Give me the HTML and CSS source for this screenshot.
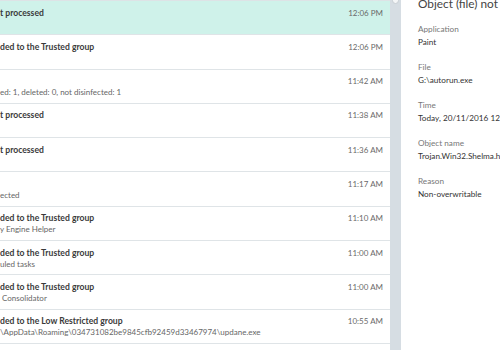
FILE: index.html
```html
<!DOCTYPE html>
<html>
<head>
<meta charset="utf-8">
<link rel="stylesheet" href="styles.css">
</head>
<body>
<div class="app">
  <div class="list">
    <div class="row selected"><div class="text"><div class="title">t processed</div><div class="sub"></div></div><div class="time">12:06 PM</div></div>
    <div class="row"><div class="text"><div class="title">ded to the Trusted group</div><div class="sub"></div></div><div class="time">12:06 PM</div></div>
    <div class="row"><div class="text"><div class="title"></div><div class="sub">ed: 1, deleted: 0, not disinfected: 1</div></div><div class="time">11:42 AM</div></div>
    <div class="row"><div class="text"><div class="title">t processed</div><div class="sub"></div></div><div class="time">11:38 AM</div></div>
    <div class="row"><div class="text"><div class="title">t processed</div><div class="sub"></div></div><div class="time">11:36 AM</div></div>
    <div class="row"><div class="text"><div class="title"></div><div class="sub">ected</div></div><div class="time">11:17 AM</div></div>
    <div class="row"><div class="text"><div class="title">ded to the Trusted group</div><div class="sub">y Engine Helper</div></div><div class="time">11:10 AM</div></div>
    <div class="row"><div class="text"><div class="title">ded to the Trusted group</div><div class="sub">uled tasks</div></div><div class="time">11:00 AM</div></div>
    <div class="row"><div class="text"><div class="title">ded to the Trusted group</div><div class="sub">&nbsp;Consolidator</div></div><div class="time">11:00 AM</div></div>
    <div class="row"><div class="text"><div class="title">ded to the Low Restricted group</div><div class="sub">\AppData\Roaming\034731082be9845cfb92459d33467974\updane.exe</div></div><div class="time">10:55 AM</div></div>
    <div class="row"><div class="text"><div class="title"></div><div class="sub"></div></div><div class="time"></div></div>
  </div>
  <div class="scrollbar"><div class="knob"></div></div>
  <div class="details">
    <div class="heading">Object (file) not processed</div>
    <div class="field"><div class="label">Application</div><div class="value">Paint</div></div>
    <div class="field"><div class="label">File</div><div class="value">G:\autorun.exe</div></div>
    <div class="field"><div class="label">Time</div><div class="value">Today, 20/11/2016 12:06 PM</div></div>
    <div class="field"><div class="label">Object name</div><div class="value">Trojan.Win32.Shelma.hx</div></div>
    <div class="field"><div class="label">Reason</div><div class="value">Non-overwritable</div></div>
  </div>
</div>
</body>
</html>
```
FILE: styles.css
```css
html, body {
  margin: 0;
  padding: 0;
  background: #ffffff;
}
body {
  font-family: Lato, "Noto Sans", sans-serif;
  width: 500px;
  height: 350px;
  overflow: hidden;
}
.app {
  display: flex;
  width: 500px;
  height: 350px;
  overflow: hidden;
}
.list {
  width: 390px;
  flex: none;
  border-top: 1.5px solid #dde3e6;
  box-sizing: border-box;
}
.row {
  display: flex;
  align-items: flex-start;
  height: 34.3px;
  box-sizing: border-box;
  border-bottom: 1.5px solid #dfe4e7;
  padding: 6.5px 7px 0 0;
  background: #ffffff;
}
.row.selected {
  background: #cff2ea;
}
.text {
  flex: 1;
  min-width: 0;
  white-space: nowrap;
  overflow: hidden;
}
.title {
  font-size: 8.6px;
  font-weight: 700;
  color: #3a3a3a;
  height: 11px;
  line-height: 11px;
}
.sub {
  font-size: 8px;
  color: #666;
  height: 11px;
  line-height: 11px;
}
.time {
  font-size: 8px;
  color: #6a6a6a;
  line-height: 11px;
  white-space: nowrap;
}
.scrollbar {
  width: 11px;
  flex: none;
  background: #d6dde3;
  position: relative;
}
.knob {
  position: absolute;
  top: -3px;
  left: 2px;
  width: 5px;
  height: 5px;
  border: 1px solid #c8ced3;
  border-radius: 50%;
  background: #f4f6f7;
}
.details {
  flex: 1;
  min-width: 0;
  padding-left: 17px;
  white-space: nowrap;
  overflow: hidden;
}
.heading {
  font-size: 11.8px;
  color: #444;
  line-height: 14px;
  margin-top: -3px;
  margin-bottom: 12px;
}
.field {
  margin-bottom: 13.5px;
}
.label {
  font-size: 8.2px;
  color: #777;
  line-height: 12px;
  margin-bottom: 0.5px;
}
.value {
  font-size: 8.2px;
  color: #333;
  line-height: 12px;
}
```
